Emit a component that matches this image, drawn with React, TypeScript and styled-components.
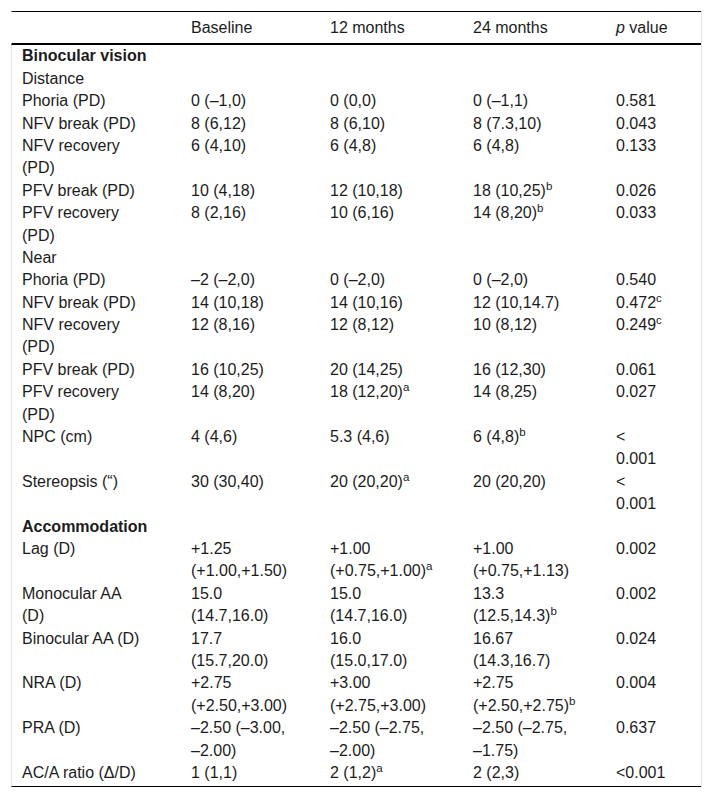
import React from "react";
import styled, { createGlobalStyle } from "styled-components";

const Global = createGlobalStyle`
  html, body { margin: 0; padding: 0; background: #ffffff; }
  body { font-family: "Liberation Sans", Arial, sans-serif; color: #1c1c1c; }
`;

const Page = styled.div`
  padding: 11px 0 0 11px;
`;

const Table = styled.table`
  border-collapse: separate;
  border-spacing: 0;
  table-layout: fixed;
  width: 691px;
  border-right: 1px solid #e4e4e4;
  font-size: 16px;
  line-height: 1.4;
`;

type Pad = { $pr: number; $first?: boolean };

const HeadCell = styled.th<Pad>`
  text-align: left;
  font-weight: normal;
  padding: 5px ${(p) => p.$pr}px 4px 10px;
  border-top: 1px solid #000;
  border-bottom: 2px solid #000;
  border-left: ${(p) => (p.$first ? "1px solid transparent" : "0")};
  vertical-align: middle;
  white-space: nowrap;
`;

const Cell = styled.td<Pad & { $last?: boolean; $bold?: boolean }>`
  padding: 0 ${(p) => p.$pr}px ${(p) => (p.$last ? 2 : 0)}px 10px;
  vertical-align: top;
  border-left: ${(p) => (p.$first ? "1px solid #e4e4e4" : "0")};
  border-bottom: ${(p) => (p.$last ? "1px solid #000" : "0")};
  font-weight: ${(p) => (p.$bold ? "bold" : "normal")};
`;

const Sup = styled.sup`
  font-size: 0.72em;
  line-height: 0;
  vertical-align: 0.5em;
`;

const Ital = styled.i`
  font-style: italic;
`;

const cols = [
  { w: 170, pr: 36 },
  { w: 139, pr: 24 },
  { w: 143, pr: 28 },
  { w: 143, pr: 28 },
  { w: 95, pr: 32 },
];

type Val = string | [string, string];
type Row = { label: string; bold?: boolean; vals?: Val[] };

const rows: Row[] = [
  { label: "Binocular vision", bold: true },
  { label: "Distance" },
  { label: "Phoria (PD)", vals: ["0 (–1,0)", "0 (0,0)", "0 (–1,1)", "0.581"] },
  { label: "NFV break (PD)", vals: ["8 (6,12)", "8 (6,10)", "8 (7.3,10)", "0.043"] },
  { label: "NFV recovery (PD)", vals: ["6 (4,10)", "6 (4,8)", "6 (4,8)", "0.133"] },
  { label: "PFV break (PD)", vals: ["10 (4,18)", "12 (10,18)", ["18 (10,25)", "b"], "0.026"] },
  { label: "PFV recovery (PD)", vals: ["8 (2,16)", "10 (6,16)", ["14 (8,20)", "b"], "0.033"] },
  { label: "Near" },
  { label: "Phoria (PD)", vals: ["–2 (–2,0)", "0 (–2,0)", "0 (–2,0)", "0.540"] },
  { label: "NFV break (PD)", vals: ["14 (10,18)", "14 (10,16)", "12 (10,14.7)", ["0.472", "c"]] },
  { label: "NFV recovery (PD)", vals: ["12 (8,16)", "12 (8,12)", "10 (8,12)", ["0.249", "c"]] },
  { label: "PFV break (PD)", vals: ["16 (10,25)", "20 (14,25)", "16 (12,30)", "0.061"] },
  { label: "PFV recovery (PD)", vals: ["14 (8,20)", ["18 (12,20)", "a"], "14 (8,25)", "0.027"] },
  { label: "NPC (cm)", vals: ["4 (4,6)", "5.3 (4,6)", ["6 (4,8)", "b"], "< 0.001"] },
  { label: "Stereopsis (“)", vals: ["30 (30,40)", ["20 (20,20)", "a"], "20 (20,20)", "< 0.001"] },
  { label: "Accommodation", bold: true },
  { label: "Lag (D)", vals: ["+1.25 (+1.00,+1.50)", ["+1.00 (+0.75,+1.00)", "a"], "+1.00 (+0.75,+1.13)", "0.002"] },
  { label: "Monocular AA (D)", vals: ["15.0 (14.7,16.0)", "15.0 (14.7,16.0)", ["13.3 (12.5,14.3)", "b"], "0.002"] },
  { label: "Binocular AA (D)", vals: ["17.7 (15.7,20.0)", "16.0 (15.0,17.0)", "16.67 (14.3,16.7)", "0.024"] },
  { label: "NRA (D)", vals: ["+2.75 (+2.50,+3.00)", "+3.00 (+2.75,+3.00)", ["+2.75 (+2.50,+2.75)", "b"], "0.004"] },
  { label: "PRA (D)", vals: ["–2.50 (–3.00, –2.00)", "–2.50 (–2.75, –2.00)", "–2.50 (–2.75, –1.75)", "0.637"] },
  { label: "AC/A ratio (Δ/D)", vals: ["1 (1,1)", ["2 (1,2)", "a"], "2 (2,3)", "<0.001"] },
];

const renderVal = (v: Val) =>
  typeof v === "string" ? v : (
    <>
      {v[0]}
      <Sup>{v[1]}</Sup>
    </>
  );

export default function App() {
  return (
    <>
      <Global />
      <Page>
        <Table>
          <colgroup>
            {cols.map((c, i) => (
              <col key={i} style={{ width: c.w }} />
            ))}
          </colgroup>
          <thead>
            <tr>
              <HeadCell $pr={cols[0].pr} $first></HeadCell>
              <HeadCell $pr={cols[1].pr}>Baseline</HeadCell>
              <HeadCell $pr={cols[2].pr}>12 months</HeadCell>
              <HeadCell $pr={cols[3].pr}>24 months</HeadCell>
              <HeadCell $pr={cols[4].pr}>
                <Ital>p</Ital> value
              </HeadCell>
            </tr>
          </thead>
          <tbody>
            {rows.map((r, ri) => {
              const last = ri === rows.length - 1;
              if (!r.vals) {
                return (
                  <tr key={ri}>
                    <Cell colSpan={5} $pr={10} $first $bold={r.bold}>
                      {r.label}
                    </Cell>
                  </tr>
                );
              }
              return (
                <tr key={ri}>
                  <Cell $pr={cols[0].pr} $first $last={last}>
                    {r.label}
                  </Cell>
                  {[0, 1, 2, 3].map((ci) => (
                    <Cell key={ci} $pr={cols[ci + 1].pr} $last={last}>
                      {renderVal(r.vals![ci])}
                    </Cell>
                  ))}
                </tr>
              );
            })}
          </tbody>
        </Table>
      </Page>
    </>
  );
}
